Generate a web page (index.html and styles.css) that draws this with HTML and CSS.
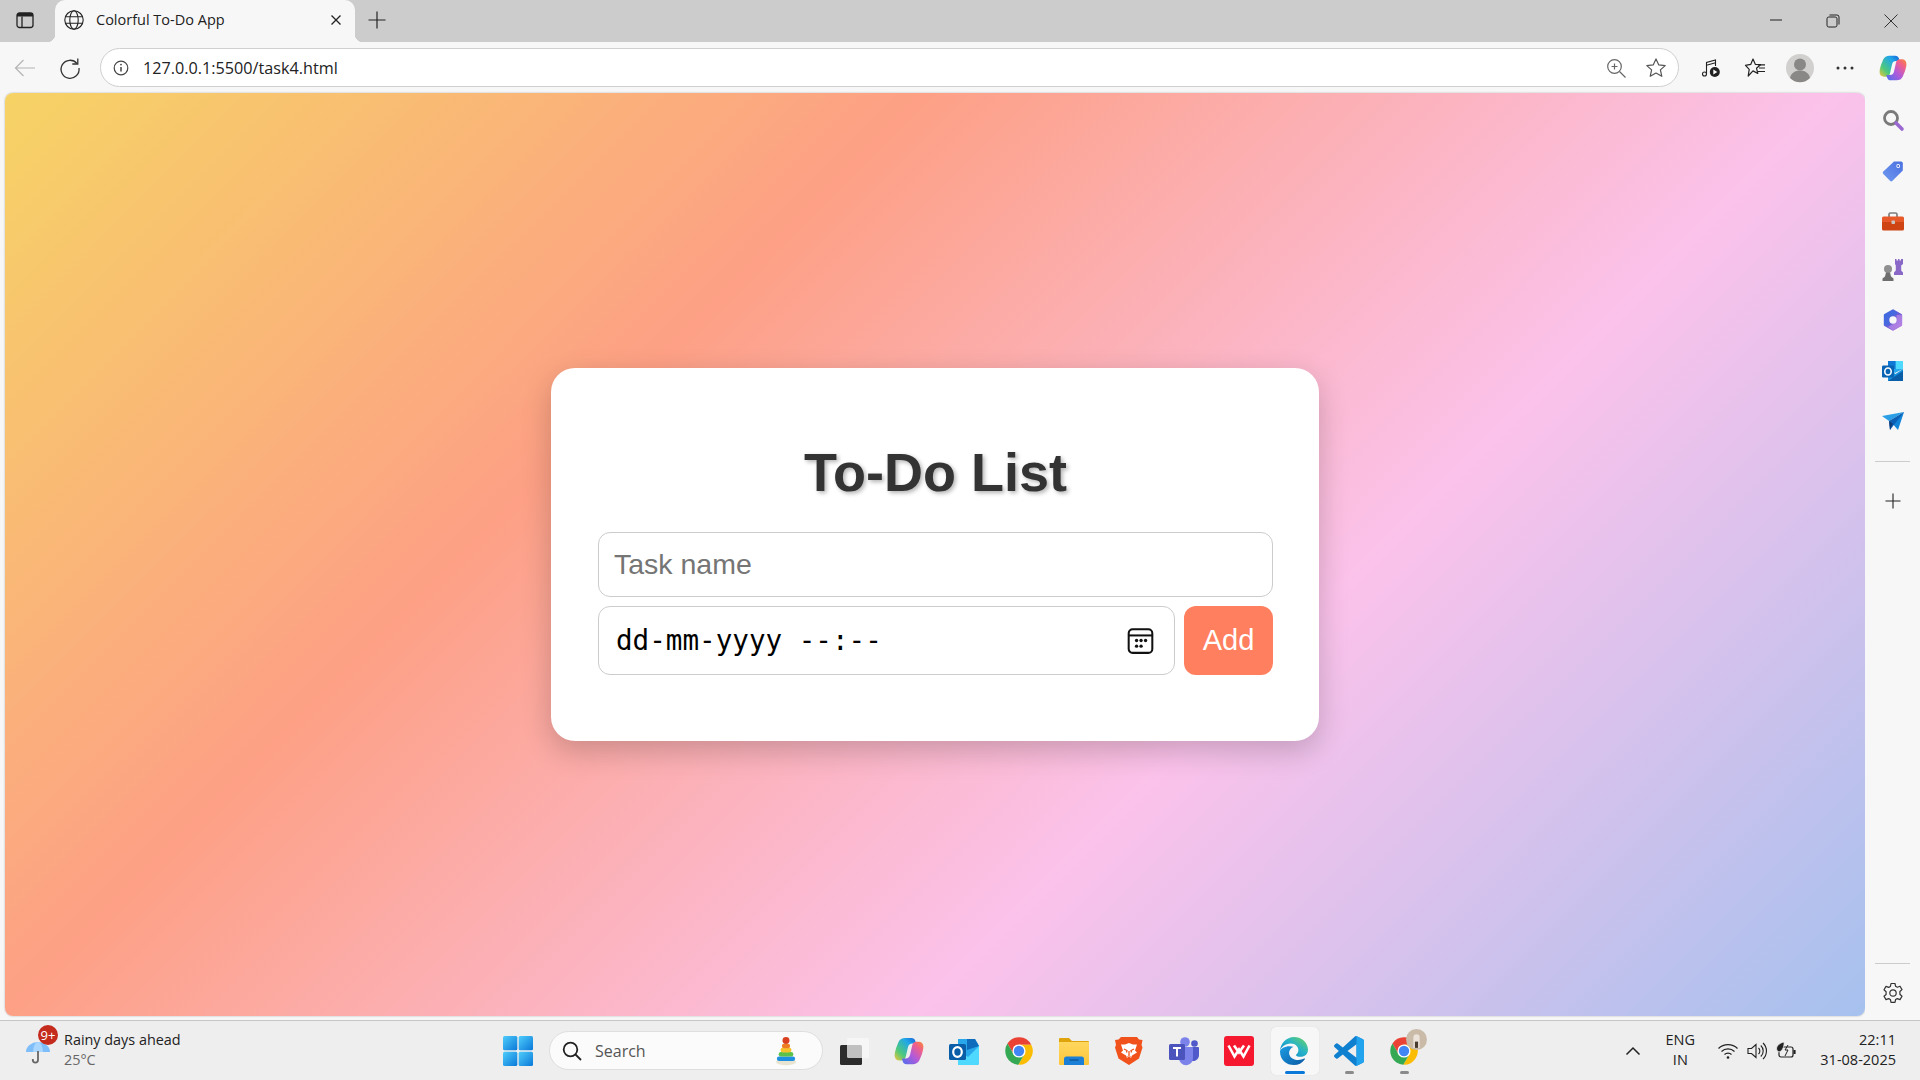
FILE: index.html
```html
<!DOCTYPE html>
<html lang="en">
<head>
<meta charset="utf-8">
<title>Colorful To-Do App</title>
<link rel="stylesheet" href="styles.css">
</head>
<body>
<svg class="defs" aria-hidden="true">
  <defs>
    <linearGradient id="gCopL" x1="0" y1="1" x2="1" y2="0"><stop offset="0" stop-color="#f5c63a"/><stop offset=".3" stop-color="#4fc97a"/><stop offset=".7" stop-color="#21a7e8"/><stop offset="1" stop-color="#1560d8"/></linearGradient>
    <linearGradient id="gCopR" x1="1" y1="0" x2="0" y2="1"><stop offset="0" stop-color="#4a6ff0"/><stop offset=".45" stop-color="#b45ad8"/><stop offset=".75" stop-color="#f0608a"/><stop offset="1" stop-color="#f98a30"/></linearGradient>
    <linearGradient id="gWin" x1="0" y1="0" x2="1" y2="1"><stop offset="0" stop-color="#4fcdfb"/><stop offset="1" stop-color="#0a78d8"/></linearGradient>
    <linearGradient id="gEdge" x1="0" y1="1" x2="1" y2="0"><stop offset="0" stop-color="#0c7fc8"/><stop offset=".55" stop-color="#27b3c8"/><stop offset="1" stop-color="#6fd65a"/></linearGradient>
    <linearGradient id="gEdge2" x1="0" y1="0" x2="1" y2="1"><stop offset="0" stop-color="#1b9de2"/><stop offset="1" stop-color="#0c59a4"/></linearGradient>
    <linearGradient id="g365" x1="0" y1="0" x2="1" y2="1"><stop offset="0" stop-color="#3b6fe0"/><stop offset=".5" stop-color="#6a5fd8"/><stop offset="1" stop-color="#c07ae0"/></linearGradient>
    <linearGradient id="gTag" x1="0" y1="1" x2="1" y2="0"><stop offset="0" stop-color="#6f9af0"/><stop offset="1" stop-color="#4a6fe0"/></linearGradient>
    <linearGradient id="gFolder" x1="0" y1="0" x2="0" y2="1"><stop offset="0" stop-color="#ffd75e"/><stop offset="1" stop-color="#fcc63a"/></linearGradient>
    <symbol id="copilot" viewBox="0 0 24 24">
      <path fill="url(#gCopL)" d="M9 1.500h5c1.500 0 2.500.8 3 2.200l.7 2.300h-3c-2 0-3 1-3.500 2.800l-1.700 7.400C9 18.500 8 19.500 6 19.500H4.500C2 19.500.5 18 .5 15.500c0-2 .5-3.500 1.200-6L3.500 5C4.500 2.500 6.500 1.500 9 1.500z"/>
      <path fill="url(#gCopR)" transform="rotate(180 12 12)" d="M9 1.500h5c1.500 0 2.500.8 3 2.200l.7 2.300h-3c-2 0-3 1-3.500 2.800l-1.700 7.400C9 18.500 8 19.500 6 19.500H4.500C2 19.500.5 18 .5 15.500c0-2 .5-3.500 1.200-6L3.500 5C4.500 2.500 6.500 1.500 9 1.500z"/>
    </symbol>
    <symbol id="chrome" viewBox="0 0 48 48">
      <path fill="#ea4335" d="M24 14H43.600A22 22 0 0 0 5.540 12.030L15.340 29Z"/>
      <path fill="#fbbc04" d="M43.600 14A22 22 0 0 1 22.860 45.970L32.660 29 24 14Z"/>
      <path fill="#34a853" d="M5.540 12.030A22 22 0 0 0 22.860 45.970L32.660 29H15.340Z"/>
      <circle cx="24" cy="24" r="10.500" fill="#fff"/>
      <circle cx="24" cy="24" r="8.300" fill="#4285f4"/>
    </symbol>
  </defs>
</svg>

<div class="app">
  <header class="titlebar">
    <div class="slot slot-toggle">
      <svg class="ic18" viewBox="0 0 18 18"><rect x="1" y="2" width="16" height="14.500" rx="2.500" fill="none" stroke="#222" stroke-width="1.300"/><path d="M1 5.500V4.500A2.500 2.500 0 0 1 3.500 2h11A2.500 2.500 0 0 1 17 4.500v1z" fill="#222"/><path d="M6 5.500v11" stroke="#222" stroke-width="1.300"/></svg>
    </div>
    <div class="tab">
      <svg class="ic20" viewBox="0 0 20 20" fill="none" stroke="#222" stroke-width="1.100"><circle cx="10" cy="10" r="9.200"/><ellipse cx="10" cy="10" rx="4.200" ry="9.200"/><path d="M1.500 6.800h17M1.500 13.200h17"/></svg>
      <span class="tab-title">Colorful To-Do App</span>
      <svg class="ic20" viewBox="0 0 20 20" stroke="#222" stroke-width="1.300"><path d="M5.500 5.500l9 9M14.500 5.500l-9 9"/></svg>
    </div>
    <div class="slot slot-plus">
      <svg class="ic18" viewBox="0 0 18 18" stroke="#222" stroke-width="1.200"><path d="M9 .5v17M.5 9h17"/></svg>
    </div>
    <div class="winctl">
      <div class="winbtn"><svg class="ic14" viewBox="-1 1 14 14" stroke="#222" stroke-width="1"><path d="M1 7h12"/></svg></div>
      <div class="winbtn"><svg class="ic14" viewBox="0 0 14 14" fill="none" stroke="#222" stroke-width="1"><rect x="1" y="3" width="10" height="10" rx="1.800"/><path d="M3.500 1h7.500a2 2 0 0 1 2 2v7.500"/></svg></div>
      <div class="winbtn"><svg class="ic14" viewBox="0 0 14 14" stroke="#333" stroke-width="1"><path d="M.5.500l13 13M13.500.5l-13 13"/></svg></div>
    </div>
  </header>

  <nav class="toolbar">
    <div class="slot slot-back">
      <svg class="ic20" viewBox="0 0 20 20" fill="none" stroke="#b4b4b4" stroke-width="1.200"><path d="M20 10H0.500M8.500 2L.5 10l8 8"/></svg>
    </div>
    <div class="slot slot-reload">
      <svg class="ic20" viewBox="0 0 20 20" fill="none" stroke="#333" stroke-width="1.300"><path d="M17 5.500A9 9 0 1 0 19 10"/><path d="M17.800 .5v5.500h-5.500"/></svg>
    </div>
    <div class="address">
      <div class="slot slot-info">
        <svg class="ic18" viewBox="0 0 18 18" fill="none" stroke="#444" stroke-width="1.200"><circle cx="9" cy="9" r="6.800"/><path d="M9 8v4.500" stroke-width="1.500"/><circle cx="9" cy="5.600" r=".9" fill="#444" stroke="none"/></svg>
      </div>
      <span class="url">127.0.0.1:5500/task4.html</span>
      <div class="slot slot-addr">
        <svg class="ic20" viewBox="0 0 20 20" fill="none" stroke="#666" stroke-width="1.200"><circle cx="8.500" cy="8.500" r="6.800"/><path d="M13.500 13.500l6 6M8.500 5.500v6M5.500 8.500h6"/></svg>
      </div>
      <div class="slot slot-addr">
        <svg class="ic20" viewBox="0 0 20 20" fill="none" stroke="#555" stroke-width="1.200" stroke-linejoin="round"><path d="M10 .9l2.800 6 6.400.7-4.800 4.300 1.400 6.400L10 15l-5.800 3.300 1.400-6.400L.8 7.600l6.400-.7z"/></svg>
      </div>
    </div>
    <div class="slot slot-music">
      <svg class="ic20" viewBox="0 0 20 20" fill="none" stroke="#222" stroke-width="1.100"><path d="M5.500 16V4.500l9-2.500v6"/><path d="M5.500 7.200l9-2.500"/><circle cx="3.500" cy="16" r="2"/><circle cx="13.800" cy="14" r="5" fill="#222" stroke="none"/><path d="M12.300 11.500l4 2.500-4 2.500z" fill="#fff" stroke="none"/></svg>
    </div>
    <div class="slot slot-fav">
      <svg class="ic20" viewBox="0 0 20 20" fill="none" stroke="#222" stroke-width="1.200" stroke-linejoin="round"><path d="M8 1l2.300 5.300 5.200.4-4 3.500 1.300 5.300L8 12.900 3.200 18l1-6.600L.5 7.300l5.200-.9z"/><path d="M13 6.800h7M14 10h6M13 13.500h7"/></svg>
    </div>
    <div class="slot slot-avatar">
      <svg class="ic28" viewBox="0 0 28 28"><circle cx="14" cy="14" r="14" fill="#d2d0ce"/><circle cx="14" cy="10.500" r="6" fill="#8a8886"/><path d="M4 24c1-5 5-7.500 10-7.500S23 19 24 24a14 14 0 0 1-20 0z" fill="#8a8886"/></svg>
    </div>
    <div class="slot slot-dots">
      <svg class="ic20" viewBox="0 0 20 20" fill="#333"><circle cx="3" cy="10" r="1.500"/><circle cx="10" cy="10" r="1.500"/><circle cx="17" cy="10" r="1.500"/></svg>
    </div>
    <div class="slot slot-copilot">
      <svg class="ic28"><use href="#copilot"/></svg>
    </div>
  </nav>

  <div class="content">
    <main class="viewport">
      <section class="card">
        <h1 class="card-title">To-Do List</h1>
        <input class="task-input" type="text" placeholder="Task name">
        <div class="form-row">
          <div class="date-field">
            <span class="date-text">dd-mm-yyyy --:--</span>
            <svg class="cal" viewBox="0 0 24 24"><rect x="1.500" y="2" width="21" height="21" rx="3.500" fill="none" stroke="#111" stroke-width="1.800"/><path d="M1.500 7.500h21" stroke="#111" stroke-width="1.800"/><g fill="#111"><circle cx="8.500" cy="12" r="1.500"/><circle cx="12.500" cy="12" r="1.500"/><circle cx="16.500" cy="12" r="1.500"/><circle cx="8.500" cy="17" r="1.500"/><circle cx="12.500" cy="17" r="1.500"/></g></svg>
          </div>
          <button class="add-btn" type="button">Add</button>
        </div>
      </section>
    </main>

    <aside class="sidebar">
      <div class="side-item"><svg class="ic22" viewBox="0 0 22 22"><circle cx="9" cy="9" r="6.500" fill="none" stroke="#7a7a7a" stroke-width="2.800"/><path d="M14 14l6 6" stroke="#9a68d0" stroke-width="3.600" stroke-linecap="round"/></svg></div>
      <div class="side-item"><svg class="ic22" viewBox="0 -1 22 22"><path d="M12 1.500h7a1.800 1.800 0 0 1 1.800 1.800v7.200L10.500 20.800a1.800 1.800 0 0 1-2.500 0L1.300 14a1.800 1.800 0 0 1 0-2.500z" fill="url(#gTag)"/><circle cx="16.200" cy="6" r="1.900" fill="#fff"/><circle cx="16.200" cy="6" r="1" fill="#3a5cc8"/></svg></div>
      <div class="side-item"><svg class="ic22" viewBox="0 -2 22 22"><path d="M7 6V3.500A1.500 1.500 0 0 1 8.500 2h5A1.500 1.500 0 0 1 15 3.500V6" fill="none" stroke="#7d7d7d" stroke-width="1.700"/><path d="M0 7a1.500 1.500 0 0 1 1.500-1.500h19A1.500 1.500 0 0 1 22 7v4H0z" fill="#e8592a"/><path d="M0 11h22v7a1.500 1.500 0 0 1-1.500 1.500h-19A1.500 1.500 0 0 1 0 18z" fill="#cf4413"/><rect x="9.500" y="9.500" width="3.500" height="3.500" rx=".8" fill="#c9c5c0"/></svg></div>
      <div class="side-item"><svg class="ic22" viewBox="0 0 22 22"><path d="M13 0h1.500v1.500H16V0h1.500v1.500H19V0h2v5l-1.800 1.500v5l1.800 2V16h-9v-2.500l1.800-2v-5L13 5z" fill="#8a68c8"/><circle cx="6" cy="10" r="4" fill="#8f8f8f"/><path d="M4 13.500h4l1 4 2.500 2V22H.5v-2.500l2.500-2z" fill="#6e6e6e"/></svg></div>
      <div class="side-item"><svg class="ic22" viewBox="0 0 22 22"><path d="M11 1.500l8 4.500v10l-8 4.500L3 16V6z" fill="url(#g365)" stroke="url(#g365)" stroke-width="2.400" stroke-linejoin="round"/><path d="M2 6l9-5 5 3-8.500 5v7.500L2 16z" fill="#3f6be0" opacity=".75"/><path d="M20 16l-9 5-5-3 8.500-5V6L20 6z" fill="#b787e6" opacity=".7"/><circle cx="11" cy="11" r="3.700" fill="#f7f7f7"/></svg></div>
      <div class="side-item"><svg class="ic22" viewBox="0 -1 22 22"><path d="M6 1h15v8l-8 4-7-4z" fill="#28a8ea"/><path d="M13.500 1H21v8h-7.500z" fill="#50d9ff"/><path d="M6 1h7.500v8H6z" fill="#0f78d4"/><path d="M6 9l7.500 5L21 9v12H6z" fill="#1490df"/><path d="M6 21l15-10v10z" fill="#0a5ea8"/><rect x="0" y="5.500" width="12" height="12" rx="1.200" fill="#0a64b4"/><ellipse cx="6" cy="11.500" rx="3.200" ry="3.500" fill="none" stroke="#fff" stroke-width="1.600"/></svg></div>
      <div class="side-item"><svg class="ic22" viewBox="0 -1 22 22"><path d="M0 6l22-4L7 11z" fill="#2a9fe6"/><path d="M22 2L16 20 9.500 12.500z" fill="#1284d8"/><path d="M22 2L7 11l1 9 3-4z" fill="#0b5fb4"/><path d="M8 20l-1-9 3.800 2.800z" fill="#123c78"/></svg></div>
      <div class="side-rule"></div>
      <div class="side-item side-plus"><svg class="ic16" viewBox="0 0 16 16" stroke="#222" stroke-width="1.100"><path d="M8 .5v15M.5 8h15"/></svg></div>
      <div class="side-foot">
        <div class="side-rule"></div>
        <div class="side-item"><svg class="ic22" viewBox="0 0 22 22" fill="none" stroke="#333" stroke-width="1.200" stroke-linejoin="round"><circle cx="11" cy="11" r="3.200"/><path d="M9 1.500h4l.6 2.800 1.700.9 2.700-1 2 3.400-2.100 1.900v2.800l2.100 1.900-2 3.400-2.700-1-1.700.9-.6 2.800H9l-.6-2.800-1.700-.9-2.700 1-2-3.400L4.100 12.500V9.700L2 7.800 4 4.400l2.700 1 1.700-.9z"/></svg></div>
      </div>
    </aside>
  </div>

  <footer class="taskbar">
    <div class="weather">
      <div class="weather-icon">
        <svg class="ic26" viewBox="0 0 26 26"><path d="M1 14a12 10 0 0 1 24 0z" fill="#7dbdfa"/><path d="M8 14a5 10 0 0 1 10 0z" fill="#a9d6ff"/><path d="M13 13v9a2.600 2.600 0 0 1-5.200 0v-1" fill="none" stroke="#666" stroke-width="1.800"/></svg>
        <span class="badge">9+</span>
      </div>
      <div class="weather-text">
        <span class="weather-title">Rainy days ahead</span>
        <span class="weather-temp">25°C</span>
      </div>
    </div>

    <div class="apps">
      <div class="app-slot">
        <svg class="ic30" viewBox="0 0 30 30"><g fill="url(#gWin)"><rect x="0" y="0" width="14.300" height="14.300" rx="1.500"/><rect x="15.700" y="0" width="14.300" height="14.300" rx="1.500"/><rect x="0" y="15.700" width="14.300" height="14.300" rx="1.500"/><rect x="15.700" y="15.700" width="14.300" height="14.300" rx="1.500"/></g></svg>
      </div>
      <div class="search">
        <svg class="ic20" viewBox="0 0 20 20" fill="none" stroke="#222" stroke-width="1.800"><circle cx="8.500" cy="8.500" r="6.800"/><path d="M13.500 13.500l5.500 5.500"/></svg>
        <span class="search-text">Search</span>
        <svg class="toy" viewBox="0 0 24 32"><ellipse cx="12" cy="28" rx="11" ry="3.500" fill="#e9e4d2"/><rect x="2" y="22" width="20" height="5" rx="2.500" fill="#1f8fe0"/><rect x="4" y="17" width="16" height="5" rx="2.500" fill="#5cc24a"/><rect x="6" y="12.500" width="12" height="5" rx="2.500" fill="#f6c32c"/><rect x="7.500" y="8" width="9" height="5" rx="2.500" fill="#ee7d22"/><circle cx="12" cy="4.500" r="3.800" fill="#d9401f"/></svg>
      </div>
      <div class="app-slot">
        <svg class="ic30" viewBox="0 0 30 30"><rect x="1" y="9" width="22" height="20" rx="1.500" fill="#2b2b2b"/><rect x="8" y="2" width="22" height="20" rx="1.500" fill="#fafafa" opacity=".72"/></svg>
      </div>
      <div class="app-slot"><svg class="ic30"><use href="#copilot"/></svg></div>
      <div class="app-slot">
        <svg class="ic30" viewBox="0 0 30 30"><path d="M9 3h17l4 7v17a2 2 0 0 1-2 2H9z" fill="#28a8ea"/><path d="M18 3h8l4 7-12 4z" fill="#0f6cbd"/><path d="M9 14l10 7 11-11v17a2 2 0 0 1-2 2H9z" fill="#50d9ff"/><rect x="0" y="8" width="17" height="16" rx="1.500" fill="#0a5ea8"/><ellipse cx="8.500" cy="16" rx="4.300" ry="4.800" fill="none" stroke="#fff" stroke-width="2.200"/></svg>
      </div>
      <div class="app-slot"><svg class="ic30"><use href="#chrome"/></svg></div>
      <div class="app-slot">
        <svg class="ic30" viewBox="0 0 30 30"><path d="M0 3a1 1 0 0 1 1-1h9l3 3h16a1 1 0 0 1 1 1v4H0z" fill="#dfa30c"/><path d="M0 6h30v22a1 1 0 0 1-1 1H1a1 1 0 0 1-1-1z" fill="url(#gFolder)"/><path d="M5 29v-6a2.500 2.500 0 0 1 2.500-2.500h15A2.500 2.500 0 0 1 25 23v6z" fill="#1b7fd6"/><path d="M10.500 24h9" stroke="#0d4f90" stroke-width="1.200"/></svg>
      </div>
      <div class="app-slot">
        <svg class="ic30" viewBox="0 0 30 30"><path d="M7 1h16l2 2.500 3.500.5-1 5 1 2.500-3.500 11L15 29 4.500 22.500 1 11.500 2 9 1 4l3.500-.5z" fill="#f1511b"/><path d="M15 7l4 1.500h4l-2 6 2 2-5 3-1 2.500h-4l-1-2.500-5-3 2-2-2-6h4z" fill="#fff"/><path d="M10 13l3 1.500-.5 2M20 13l-3 1.500.5 2M15 15v5" stroke="#f1511b" stroke-width="1.300" fill="none"/><path d="M12.500 20.500h5L15 23z" fill="#f1511b"/></svg>
      </div>
      <div class="app-slot">
        <svg class="ic30" viewBox="0 0 30 30"><circle cx="16" cy="6" r="4.800" fill="#7b83eb"/><circle cx="25.500" cy="7.500" r="3.300" fill="#5059c9"/><path d="M19 11h10a1 1 0 0 1 1 1v7a6 6 0 0 1-9 5.200z" fill="#5059c9"/><path d="M8 11h15a1 1 0 0 1 1 1v10a7 7 0 0 1-14 .500z" fill="#7b83eb"/><rect x="0" y="8" width="16" height="16" rx="1.500" fill="#4b53bc"/><path d="M4 12h8M8 12v8.500" stroke="#fff" stroke-width="2"/></svg>
      </div>
      <div class="app-slot">
        <svg class="ic30" viewBox="0 0 30 30"><rect width="30" height="30" rx="3" fill="#f5182e"/><path d="M4.500 9.500l6 11 4.500-7 4.500 7 6-11M10 9.500l5 7 5-7" fill="none" stroke="#fff" stroke-width="2.600"/></svg>
      </div>
      <div class="app-slot is-active">
        <svg class="ic30" viewBox="0 0 24 24"><path fill="url(#gEdge)" d="M12 .8C18.500.8 23.200 5.600 23.200 11c0 3.600-2.800 5.600-5.800 5.600-2 0-3.600-.6-3.900-1.300-.2-.5 2-1.400 2-4 0-3-2.600-5.300-6-5.300C4.800 6 1 9 .8 12.500.8 6.200 6 .8 12 .8z"/><path fill="url(#gEdge2)" d="M.8 12.500C.8 18.800 6 23.200 12 23.200c3.300 0 6.600-1.600 8.700-4.700.3-.5-.1-.7-.5-.5-2.900 1.600-7.500 1.700-10.300-.7-2.200-1.900-2.400-5-.5-7.100.7-.8 1.700-1.300 2.200-1.500C7.500 7 .8 9.300.8 12.500z"/></svg>
        <span class="active-bar"></span>
      </div>
      <div class="app-slot is-open">
        <svg class="ic30" viewBox="0 0 24 24"><path fill="#0f7fd0" d="M23.150 2.587L18.210.21a1.494 1.494 0 0 0-1.705.29l-9.460 8.630-4.120-3.128a.999.999 0 0 0-1.276.057L.327 7.261A1 1 0 0 0 .326 8.740L3.899 12 .326 15.260a1 1 0 0 0 .001 1.479L1.650 17.940a.999.999 0 0 0 1.276.057l4.120-3.128 9.460 8.630a1.492 1.492 0 0 0 1.704.29l4.942-2.377A1.500 1.500 0 0 0 24 20.060V3.939a1.500 1.500 0 0 0-.85-1.352zm-5.146 14.861L10.826 12l7.178-5.448v10.896z"/><path fill="#22a3ee" d="M18.210.21l4.940 2.377A1.500 1.500 0 0 1 24 3.939V20.060a1.500 1.500 0 0 1-.85 1.353l-4.942 2.377a1.492 1.492 0 0 1-1.704-.29c.6.500 1.500.1 1.500-.7V1c0-.8-.9-1.200-1.500-.5a1.494 1.494 0 0 1 1.706-.29z"/></svg>
        <span class="open-dot"></span>
      </div>
      <div class="app-slot is-open">
        <svg class="ic30"><use href="#chrome"/></svg>
        <svg class="profile" viewBox="0 0 20 20"><circle cx="10" cy="10" r="10" fill="#c9bba8"/><path d="M7 18V8a3 3 0 0 1 6 0v10z" fill="#ece4da"/><path d="M8.500 18v-6h3v6z" fill="#4a3a30"/></svg>
        <span class="open-dot"></span>
      </div>
    </div>

    <div class="tray">
      <div class="tray-chevron"><svg class="ic16" viewBox="0 0 16 16" fill="none" stroke="#222" stroke-width="1.500"><path d="M1.500 11.500L8 5l6.500 6.500"/></svg></div>
      <div class="lang"><span>ENG</span><span>IN</span></div>
      <div class="tray-icons">
        <svg class="ic20" viewBox="0 0 20 20" fill="none" stroke="#222" stroke-width="1.200"><path d="M.5 7.500a13.500 13.500 0 0 1 19 0M3.500 10.500a9.300 9.300 0 0 1 13 0M6.500 13.500a5 5 0 0 1 7 0"/><circle cx="10" cy="16.500" r="1.300" fill="#222" stroke="none"/></svg>
        <svg class="ic20" viewBox="0 0 20 20" fill="none" stroke="#222" stroke-width="1.100"><path d="M1 7.500h3.500L9 3.500v13l-4.500-4H1z"/><path d="M11.500 7a4 4 0 0 1 0 6M13.800 4.500a7.500 7.500 0 0 1 0 11M16 2a11 11 0 0 1 0 16"/></svg>
        <svg class="ic20" viewBox="0 0 20 20" fill="none" stroke="#222" stroke-width="1.200"><rect x="3" y="6" width="14" height="10" rx="2"/><path d="M17.500 9.500h1.500v3h-1.500" fill="#222"/><path d="M.5 7C2 2.500 6 1.500 8 1c.5 3-1 9-5 10-1.500-.500-2.500-2-2.500-4z" fill="#222" stroke="#eee" stroke-width=".8"/><path d="M9 15l3-6h-3l3-5" stroke-width="1"/></svg>
      </div>
      <div class="clock"><span>22:11</span><span>31-08-2025</span></div>
    </div>
  </footer>
</div>
</body>
</html>
```

FILE: styles.css
```css
* { box-sizing: border-box; }
html, body { margin: 0; height: 100%; }
body { font-family: "Open Sans", "Noto Sans", sans-serif; color: #222; overflow: hidden; background: #f7f7f7; }
svg { display: block; flex: none; overflow: visible; }
.defs { position: absolute; width: 0; height: 0; }
.ic14 { width: 14px; height: 14px; }
.ic16 { width: 16px; height: 16px; }
.ic18 { width: 18px; height: 18px; }
.ic20 { width: 20px; height: 20px; }
.ic22 { width: 22px; height: 22px; }
.ic26 { width: 26px; height: 26px; }
.ic28 { width: 28px; height: 28px; }
.ic30 { width: 30px; height: 30px; }

.app { display: flex; flex-direction: column; height: 1080px; width: 1920px; }
.slot { display: flex; align-items: center; justify-content: center; flex: none; height: 100%; }

/* title bar */
.titlebar { display: flex; height: 42px; flex: none; background: #cccccc; }
.slot-toggle { width: 40px; margin-left: 5px; padding-bottom: 2px; }
.tab { position: relative; display: flex; align-items: center; width: 300px; margin-left: 10px; padding: 0 9px 2px; gap: 12px; background: #f7f7f7; border-radius: 10px 10px 0 0; }
.tab::before, .tab::after { content: ""; position: absolute; bottom: 0; width: 8px; height: 8px; }
.tab::before { left: -8px; background: radial-gradient(circle at 0 0, transparent 8px, #f7f7f7 8.500px); }
.tab::after { right: -8px; background: radial-gradient(circle at 100% 0, transparent 8px, #f7f7f7 8.500px); }
.tab-title { flex: 1; font-size: 14.500px; line-height: 20px; white-space: nowrap; color: #222; }
.slot-plus { width: 40px; margin-left: 2px; padding-bottom: 2px; }
.winctl { display: flex; margin-left: auto; }
.winbtn { display: flex; align-items: center; justify-content: center; width: 58px; height: 42px; }

/* toolbar */
.toolbar { display: flex; align-items: center; height: 51px; flex: none; background: #f7f7f7; padding: 0 0 0 5px; }
.slot-back { width: 40px; }
.slot-reload { width: 50px; }
.address { display: flex; align-items: center; flex: 1; height: 39px; margin: 0 10px 0 5px; padding-right: 2px; background: #fff; border: 1px solid #cfcfcf; border-radius: 20px; }
.slot-info { width: 39px; }
.url { flex: 1; margin-left: 3px; font-size: 16.200px; line-height: 20px; color: #222; white-space: nowrap; }
.slot-addr { width: 40px; }
.slot-music, .slot-fav { width: 44px; }
.slot-avatar { width: 46px; }
.slot-dots { width: 43px; padding-left: 1px; }
.slot-copilot { width: 54px; }

/* page */
.content { display: flex; flex: 1; min-height: 0; }
.viewport { display: flex; align-items: center; justify-content: center; width: 1860px; margin: 0 0 4px 5px; border-radius: 8px; background: linear-gradient(135deg, #f6d365 0%, #fda085 33%, #fbc2eb 66%, #a6c1ee 100%); box-shadow: 0 0 2px rgba(0, 0, 0, .3); }
.card { width: 768px; padding: 48px 46px 66px 47px; background: #fff; border-radius: 24px; box-shadow: 0 10px 30px rgba(0, 0, 0, .2); font-family: "Liberation Sans", Arial, sans-serif; }
.card-title { margin: 24px 0 28px; font-size: 54px; line-height: 64px; font-weight: 700; text-align: center; color: #333; text-shadow: 2px 2px 4px rgba(0, 0, 0, .3); }
.task-input { display: block; width: 100%; height: 65px; padding: 0 15px; font: 400 28.500px "Liberation Sans", Arial, sans-serif; color: #222; background: #fff; border: 1px solid #ccc; border-radius: 12px; outline: none; }
.task-input::placeholder { color: #757575; opacity: 1; }
.form-row { display: flex; gap: 9px; margin-top: 9px; height: 69px; }
.date-field { display: flex; align-items: center; justify-content: space-between; flex: 1; padding: 0 20px 0 17px; background: #fff; border: 1px solid #ccc; border-radius: 12px; }
.date-text { font-family: "DejaVu Sans Mono", "Liberation Mono", monospace; font-size: 27.600px; line-height: 32px; color: #000; white-space: pre; }
.cal { width: 27px; height: 27px; }
.add-btn { width: 89px; padding: 0; font: 400 29px "Liberation Sans", Arial, sans-serif; color: #fff; background: #ff7f5f; border: 0; border-radius: 12px; }

/* edge sidebar */
.sidebar { display: flex; flex-direction: column; width: 55px; padding: 2px 0; background: #f7f7f7; }
.side-item { display: flex; align-items: center; justify-content: center; height: 50px; flex: none; }
.side-rule { width: 35px; height: 1px; flex: none; margin: 16px auto 0; background: #cccccc; }
.side-plus { margin-top: 14px; }
.side-foot { margin-top: auto; }
.side-foot .side-rule { margin-top: 0; margin-bottom: 4px; }

/* taskbar */
.taskbar { display: grid; grid-template-columns: 1fr auto 1fr; align-items: center; height: 60px; flex: none; background: #eeeeee; border-top: 1px solid #c6c6c6; }
.weather { display: flex; align-items: center; padding-left: 25px; gap: 13px; }
.weather-icon { position: relative; width: 26px; height: 26px; }
.badge { position: absolute; top: -13px; left: 13px; width: 20px; height: 20px; border-radius: 50%; background: #c42b1c; color: #fff; font-size: 13px; line-height: 20px; text-align: center; }
.weather-text { display: flex; flex-direction: column; line-height: 20px; margin-top: -2px; }
.weather-title { font-size: 14.400px; color: #222; }
.weather-temp { font-size: 14.400px; color: #666; }

.apps { display: flex; align-items: center; margin-left: 2px; }
.app-slot { position: relative; display: flex; align-items: center; justify-content: center; width: 55px; height: 48px; }
.is-active::before { content: ""; position: absolute; top: 0; bottom: 0; left: 4px; right: 3px; background: #f7f7f7; border-radius: 5px; box-shadow: 0 0 1px rgba(0, 0, 0, .15); }
.is-active svg { position: relative; }
.active-bar { position: absolute; bottom: 1px; left: 18px; width: 20px; height: 3px; border-radius: 2px; background: #0a78d8; }
.open-dot { position: absolute; bottom: 1px; left: 23px; width: 9px; height: 3px; border-radius: 2px; background: #8a8a8a; }
.profile { position: absolute; top: 2px; left: 29px; width: 21px; height: 21px; }
.search { display: flex; align-items: center; width: 274px; height: 39px; margin: 0 3.500px; padding: 0 25px 0 12px; background: #fbfbfb; border: 1px solid #dedede; border-radius: 20px; }
.search-text { flex: 1; margin-left: 13px; font-size: 16px; color: #555; }
.toy { width: 22px; height: 30px; }

.tray { display: flex; align-items: center; justify-self: end; padding-right: 24px; font-size: 14.500px; line-height: 20px; color: #222; }
.tray-chevron { margin-right: 19px; margin-left: 1px; }
.lang { display: flex; flex-direction: column; align-items: center; width: 40px; margin-right: 18px; margin-top: -2px; }
.tray-icons { display: flex; gap: 9px; margin-right: 24px; }
.clock { display: flex; flex-direction: column; align-items: flex-end; margin-top: -2px; }
```
